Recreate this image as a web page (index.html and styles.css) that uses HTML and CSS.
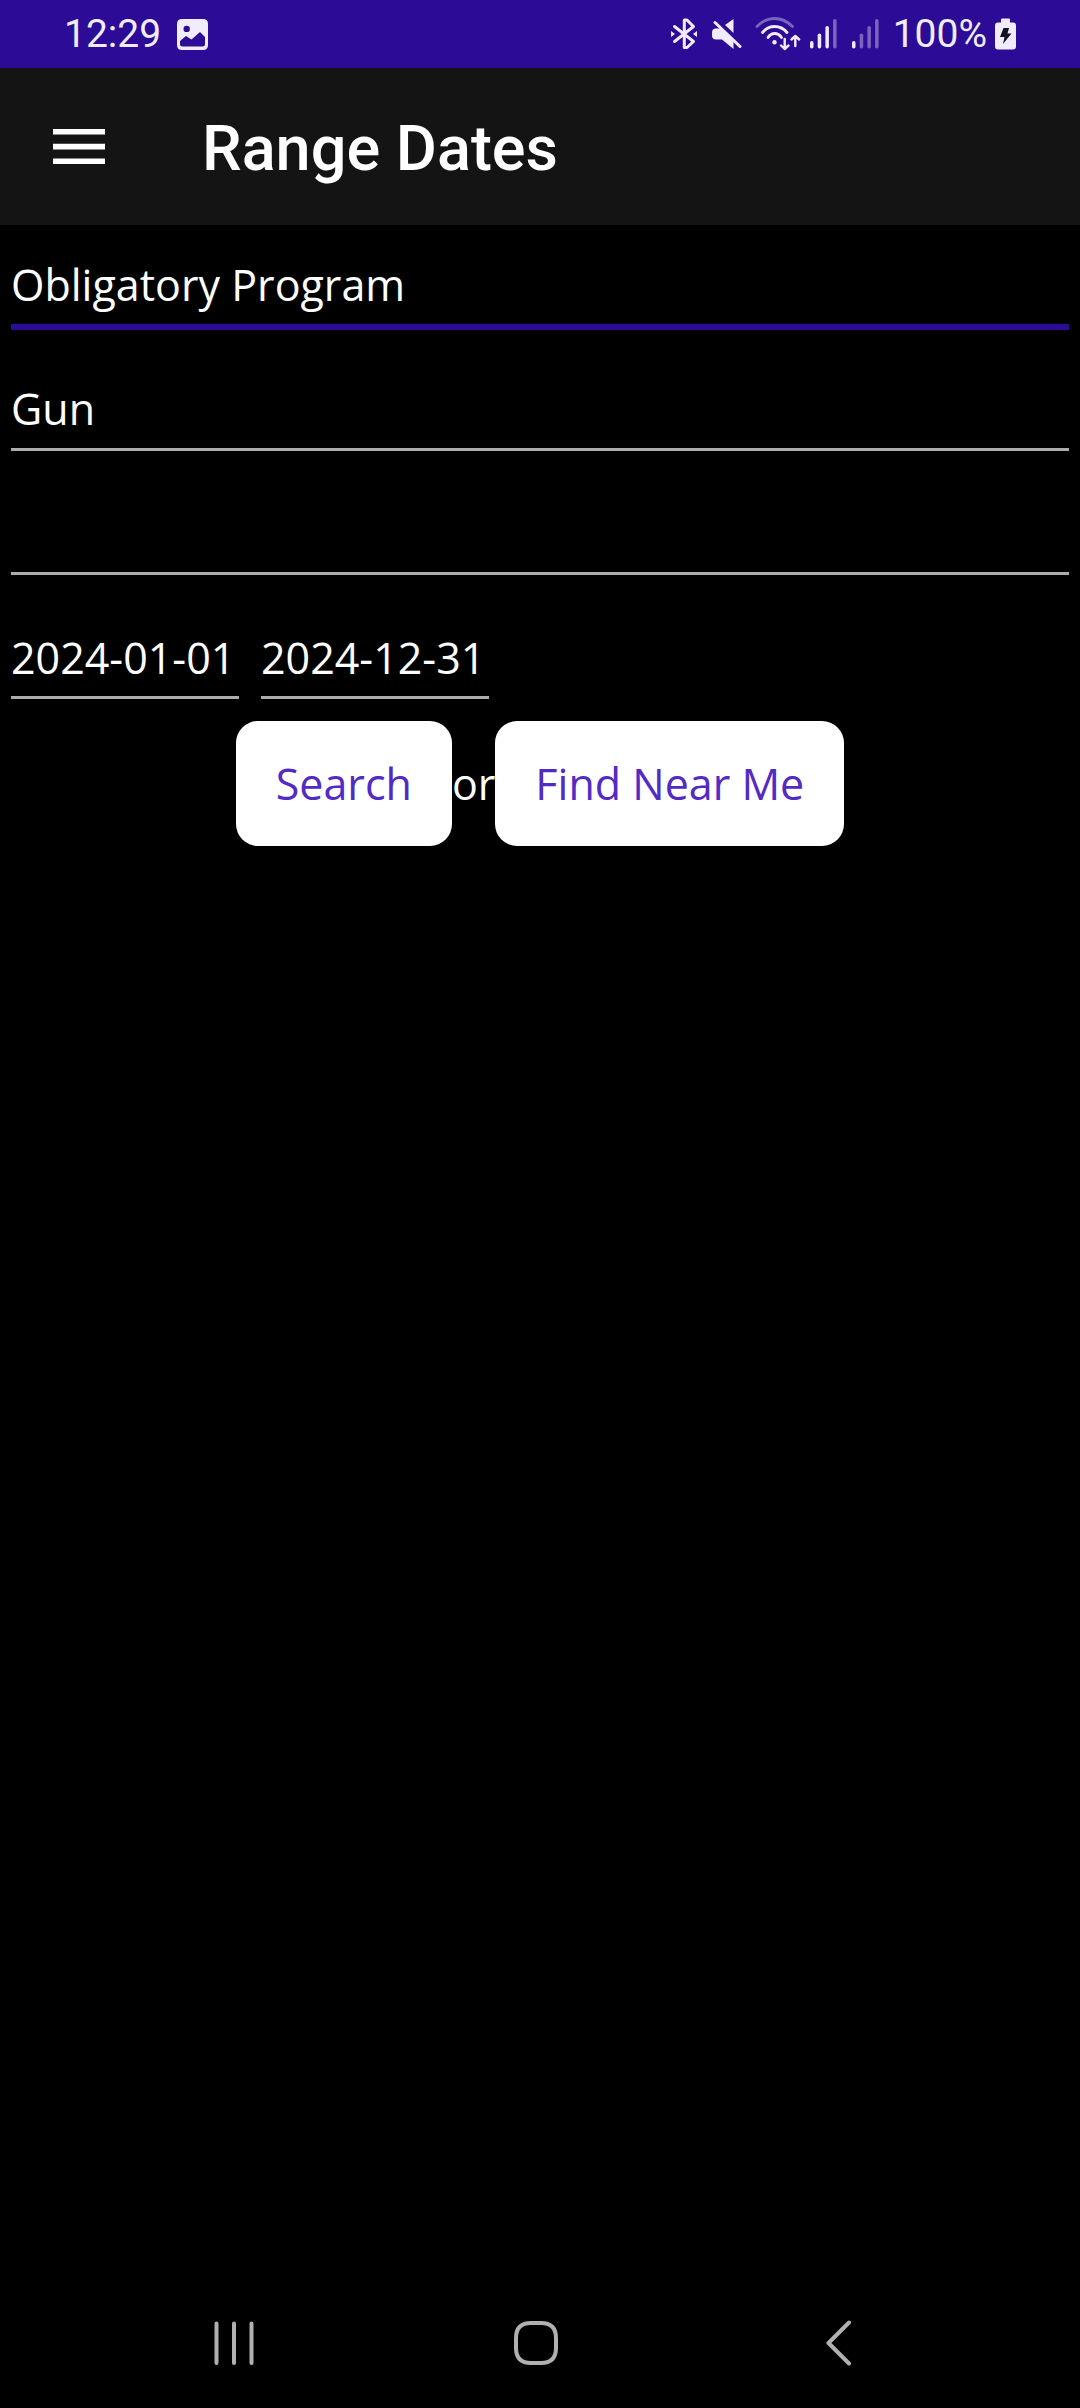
FILE: index.html
```html
<!DOCTYPE html>
<html lang="en">
<head>
<meta charset="utf-8">
<meta name="viewport" content="width=device-width, initial-scale=1">
<title>Range Dates</title>
<link rel="stylesheet" href="styles.css">
</head>
<body>
<div class="status-bar">
  <div class="status-left">
    <span>12:29</span>
    <svg width="31" height="31" viewBox="0 0 31 31" aria-hidden="true">
      <path fill="currentColor" fill-rule="evenodd" d="M5 0H26Q31 0 31 5V26Q31 31 26 31H5Q0 31 0 26V5Q0 0 5 0ZM9.700 6.700A3.200 3.200 0 1 0 9.700 13.100A3.200 3.200 0 1 0 9.700 6.700ZM3 22V25Q3 27.500 5.500 27.500H25.500Q28 27.500 28 25V18L23 13L14.500 20.500L9 17Z"/>
    </svg>
  </div>
  <div class="status-right">
    <svg width="28" height="32" viewBox="0 0 28 32" aria-hidden="true">
      <path fill="none" stroke="currentColor" stroke-width="3" stroke-linejoin="round" stroke-linecap="round" d="M4.500 8.500L23.500 23.500L17 29.500H14.300V2H17L23.500 8.500L4.500 23.500"/>
      <path fill="currentColor" d="M1 13L5 16L1 19ZM27 13L23 16L27 19Z"/>
    </svg>
    <svg class="mute" width="30" height="32" viewBox="0 0 30 32" aria-hidden="true">
      <path fill="currentColor" d="M13 7L21.500 1V15ZM4 10.500H8L21.500 22.500V31L10 21.500H4Q0 21.500 0 17.500V14.500Q0 10.500 4 10.500Z"/>
      <path fill="none" stroke="currentColor" stroke-width="3" stroke-linecap="round" d="M3 4.500L28 28.500"/>
    </svg>
    <svg class="wifi" width="46" height="36" viewBox="0 0 46 36" aria-hidden="true">
      <g fill="none" stroke="currentColor" stroke-width="2.800" stroke-linecap="round" stroke-linejoin="round">
        <path opacity=".4" d="M2 10.500Q10 2.500 19.700 2.500T37.500 10.500"/>
        <path d="M7.500 16.500Q12.500 10.500 19.700 10.500T32 16.500"/>
        <path d="M13 21.500Q15.500 17.500 19.700 17.500T26.500 21.500"/>
        <path stroke-width="2.400" d="M29.700 23V33M26 29.500L29.700 33L33.500 29.500M40.300 30V20M36.500 23.500L40.300 20L44.200 23.500"/>
      </g>
      <circle cx="19.500" cy="26.300" r="2.200" fill="currentColor"/>
    </svg>
    <svg class="signal" width="28" height="32" viewBox="0 0 28 32" aria-hidden="true">
      <g fill="currentColor">
        <rect x="1" y="23" width="3.500" height="7.500" rx="1.700"/>
        <rect x="8.700" y="15.500" width="3.500" height="15" rx="1.700"/>
        <rect x="16.400" y="8" width="3.500" height="22.500" rx="1.700"/>
        <rect x="24.100" y="1" width="3.500" height="29.500" rx="1.700" opacity=".4"/>
      </g>
    </svg>
    <svg class="signal" width="28" height="32" viewBox="0 0 28 32" aria-hidden="true">
      <g fill="currentColor">
        <rect x="1" y="23" width="3.500" height="7.500" rx="1.700"/>
        <rect x="8.700" y="15.500" width="3.500" height="15" rx="1.700" opacity=".4"/>
        <rect x="16.400" y="8" width="3.500" height="22.500" rx="1.700" opacity=".4"/>
        <rect x="24.100" y="1" width="3.500" height="29.500" rx="1.700" opacity=".4"/>
      </g>
    </svg>
    <span class="charge">100%</span>
    <svg class="battery" width="21" height="32" viewBox="0 0 21 32" aria-hidden="true">
      <path fill="currentColor" d="M7 .5H14Q15 .5 15 1.500V4.500H18Q21 4.500 21 7.500V28.500Q21 31.500 18 31.500H3Q0 31.500 0 28.500V7.500Q0 4.500 3 4.500H6V1.500Q6 .5 7 .5Z"/>
      <path fill="#16121f" d="M8.500 10H14L12.500 15.500H16.500L8 26L9.500 19H5Z"/>
    </svg>
  </div>
</div>
<header class="app-bar">
  <button class="menu-button" type="button" aria-label="Open menu">
    <svg width="52" height="36" viewBox="0 0 52 36" aria-hidden="true">
      <path fill="currentColor" d="M0 0H52V5.500H0ZM0 14.700H52V20.400H0ZM0 29.400H52V35H0Z"/>
    </svg>
  </button>
  <h1>Range Dates</h1>
</header>
<main>
  <form class="search-form">
    <select class="field field-active" aria-label="Program"><option>Obligatory Program</option></select>
    <select class="field" aria-label="Weapon type"><option>Gun</option></select>
    <select class="field" aria-label="Region"><option></option></select>
    <div class="dates">
      <input class="field" type="text" value="2024-01-01" aria-label="From date">
      <input class="field" type="text" value="2024-12-31" aria-label="To date">
    </div>
    <div class="actions">
      <button type="button">Search</button>
      <span>or</span>
      <button type="button">Find Near Me</button>
    </div>
  </form>
</main>
<nav class="nav-bar">
  <button type="button" aria-label="Recent apps">
    <svg width="44" height="46" viewBox="0 0 44 46"><path d="M4.500 3.500V43M22 3.500V43M39.500 3.500V43"/></svg>
  </button>
  <button type="button" aria-label="Home">
    <svg width="44" height="46" viewBox="0 0 44 46"><path d="M17 3H27Q42 3 42 18V28Q42 43 27 43H17Q2 43 2 28V18Q2 3 17 3Z"/></svg>
  </button>
  <button type="button" aria-label="Back">
    <svg width="44" height="46" viewBox="0 0 44 46"><path d="M33 2.500L12.500 23L33 43.500"/></svg>
  </button>
</nav>
</body>
</html>
```
FILE: styles.css
```css
* {
  box-sizing: border-box;
}

body {
  margin: 0;
  min-height: 100vh;
  display: flex;
  flex-direction: column;
  background: #000;
  color: #fff;
  font: 43px/60px "Open Sans", sans-serif;
}

svg {
  display: block;
  flex: none;
}

button {
  margin: 0;
  padding: 0;
  border: 0;
  background: none;
  color: inherit;
  font: inherit;
}

.status-bar {
  display: flex;
  justify-content: space-between;
  height: 68px;
  padding: 0 64px;
  background: #2c0b96;
  color: #f0ecfb;
  font: 39px/68px Roboto, sans-serif;
}

.status-left,
.status-right {
  display: flex;
  align-items: center;
}

.status-left {
  gap: 16px;
}

.mute,
.signal + .signal {
  margin-left: 14px;
}

.wifi {
  margin-left: 13px;
}

.signal {
  margin-left: 8px;
}

.charge {
  margin-left: 14px;
}

.battery {
  margin-left: 8px;
}

.app-bar {
  display: flex;
  align-items: center;
  height: 157px;
  padding: 0 53px;
  gap: 97px;
  background: #141414;
}

h1 {
  margin: 0;
  padding-top: 4px;
  font: 500 63px/72px Roboto, sans-serif;
}

main {
  flex: 1;
  padding: 0 11px;
}

.search-form {
  display: flex;
  flex-direction: column;
  gap: 22px;
}

.field {
  appearance: none;
  width: 100%;
  height: 102px;
  margin: 0;
  padding: 30px 0 9px;
  border: 0;
  border-bottom: 3px solid #adadad;
  border-radius: 0;
  outline: 0;
  background: none;
  color: inherit;
  font: inherit;
}

.field-active {
  border-color: #2c0b96;
  box-shadow: 0 3px #2c0b96;
}

.dates {
  display: flex;
  gap: 22px;
}

.dates .field {
  width: 228px;
}

.actions {
  display: flex;
  justify-content: center;
  align-items: center;
}

.actions button {
  height: 125px;
  padding: 0 40px;
  border-radius: 22px;
  background: #fff;
  color: #512bc4;
}

.nav-bar {
  display: grid;
  grid-template-columns: repeat(3, 1fr);
  height: 131px;
  padding: 0 91px 0 83px;
  color: #b0b0b0;
}

.nav-bar button {
  display: grid;
  place-items: center;
}

.nav-bar path {
  fill: none;
  stroke: currentColor;
  stroke-width: 4;
  stroke-linecap: round;
  stroke-linejoin: round;
}
```
